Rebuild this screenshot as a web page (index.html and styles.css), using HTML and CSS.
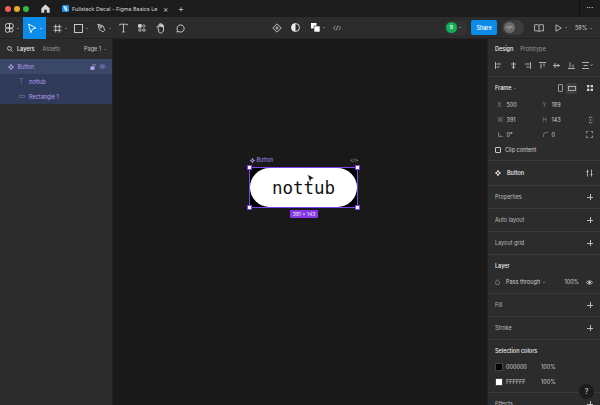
FILE: index.html
```html
<!DOCTYPE html>
<html lang="en">
<head>
<meta charset="utf-8">
<title>Fullstack Decal - Figma Basics</title>
<link rel="stylesheet" href="styles.css">
</head>
<body>
<div class="app">
  <header class="tabbar">
    <div class="lights"><i class="light red"></i><i class="light yellow"></i><i class="light green"></i></div>
    <div class="home"><svg width="9" height="9" viewBox="0 0 10 10"><path d="M5 .6 9.6 4.8V9.6H6.4V6.4H3.6V9.6H.4V4.8Z" fill="#d8d8d8"/></svg></div>
    <div class="tab">
      <svg class="tab-icon" width="7" height="7" viewBox="0 0 8 8"><rect width="8" height="8" rx="1.4" fill="#1f8fe8"/><path d="M1.5 1.5H5L6.5 6.5H3.5Z" fill="#bfe2fb"/></svg>
      <span class="tab-title">Fullstack Decal - Figma Basics Le</span>
      <span class="tab-close">×</span>
    </div>
    <span class="tab-add">+</span>
    <div class="more">•••</div>
  </header>

  <nav class="toolbar">
    <div class="tools">
      <div class="tool tool-center">
        <svg width="9" height="11" viewBox="0 0 9 11" fill="none" stroke="#d8d8d8" stroke-width=".9"><path d="M4.500 .6H2.500a2.200 2.200 0 0 0 0 4.400h2ZM4.500 .6h1.700a2.200 2.200 0 0 1 0 4.400H4.500ZM4.500 5H2.500a2.200 2.200 0 0 0 0 4.400 2 2 0 0 0 2-2Z"/><circle cx="6.300" cy="7.200" r="1.800"/></svg><b class="caret"></b>
      </div>
      <div class="tool tool-center tool-move">
        <svg width="10" height="11" viewBox="0 0 10 11" fill="none" stroke="#fff" stroke-width=".9"><path d="M1.500 1 9 5 5.500 6 3.800 9.800Z"/></svg><b class="caret light-caret"></b>
      </div>
      <div class="tool tool-frame">
        <svg width="9" height="9" viewBox="0 0 10 10" stroke="#d8d8d8" stroke-width=".9"><path d="M3 .5V9.500M7 .5V9.500M.5 3H9.500M.5 7H9.500"/></svg><b class="caret"></b>
      </div>
      <div class="tool">
        <svg width="9" height="9" viewBox="0 0 10 10" fill="none" stroke="#d8d8d8" stroke-width="1"><rect x=".6" y=".6" width="8.800" height="8.800"/></svg><b class="caret"></b>
      </div>
      <div class="tool tool-pen">
        <svg width="9" height="10" viewBox="0 0 10 11" fill="none" stroke="#d8d8d8" stroke-width=".9"><path d="M1 1.200 6.800 3.200 8.600 8 6.600 9.600 2.600 7.400Z"/><circle cx="4.200" cy="4.400" r="1"/><path d="M1 1.200 3.500 3.700"/></svg><b class="caret"></b>
      </div>
      <div class="tool tool-plain">
        <svg width="9" height="10" viewBox="0 0 10 10" fill="none" stroke="#d8d8d8" stroke-width=".9"><path d="M.8 2.200V.8H9.200V2.200M5 .8V9.400M3.600 9.400H6.400"/></svg>
      </div>
      <div class="tool tool-plain">
        <svg width="8" height="8" viewBox="0 0 10 10" fill="none" stroke="#d8d8d8" stroke-width="1"><rect x=".8" y=".8" width="3.200" height="3.200" fill="#d8d8d8"/><path d="M7.300.6 9 2.400 7.300 4.200 5.600 2.400Z"/><circle cx="2.400" cy="7.600" r="1.600"/><circle cx="7.400" cy="7.600" r="1.600"/></svg>
      </div>
      <div class="tool tool-plain">
        <svg width="10" height="11" viewBox="0 0 10 11" fill="none" stroke="#d8d8d8" stroke-width=".9"><path d="M2.600 6 1.200 4.400c-.6-.8.4-1.500 1-1L3 4.200V1.700c0-.9 1.100-.9 1.100 0V3.800 1.100c0-.8 1.200-.8 1.200 0V3.800 1.600c0-.8 1.100-.8 1.100 0V4.200 2.600c0-.8 1.100-.8 1.100 0V7c0 1.700-1.300 3-3 3S3.300 9 2.600 8Z"/></svg>
      </div>
      <div class="tool tool-plain">
        <svg width="9" height="9" viewBox="0 0 10 10" fill="none" stroke="#d8d8d8" stroke-width="1"><path d="M5 1a4 4 0 1 1-2.200 7.300L1 9l.7-1.900A4 4 0 0 1 5 1Z"/></svg>
      </div>
    </div>
    <div class="center-tools">
      <svg width="10" height="10" viewBox="0 0 10 10" fill="none" stroke="#cfcfcf" stroke-width=".9"><path d="M5 .8 9.200 5 5 9.200 .8 5Z"/><circle cx="5" cy="5" r="1.100"/></svg>
      <svg width="9" height="9" viewBox="0 0 10 10"><circle cx="5" cy="5" r="4.400" fill="none" stroke="#eee"/><path d="M5 .6a4.400 4.400 0 0 0 0 8.800Z" fill="#eee"/></svg>
      <span class="boolean"><svg width="9" height="9" viewBox="0 0 9 9"><rect width="5.500" height="5.500" fill="#fff"/><rect x="3" y="3" width="6" height="6" fill="#fff" stroke="#2c2c2c" stroke-width=".6"/></svg><b class="caret"></b></span>
      <svg width="8" height="6" viewBox="0 0 8 6" fill="none" stroke="#aaa" stroke-width=".8"><path d="M2.400 .8.500 3 2.400 5.200M5.600 .8 7.500 3 5.600 5.200M4.700 .8 3.300 5.200"/></svg>
    </div>
    <div class="right-tools">
      <div class="avatar-wrap"><span class="avatar">B</span><b class="caret"></b></div>
      <button class="share">Share</button>
      <div class="dev-toggle"><span class="dev-knob">&lt;/&gt;</span></div>
      <svg class="book" width="10" height="8" viewBox="0 0 10 8" fill="none" stroke="#d0d0d0" stroke-width=".8"><path d="M5 1.300C4 .5 2 .5.600.8V7c1.400-.3 3.400-.3 4.400.5 1-.8 3-.8 4.400-.5V.8C8 .5 6 .5 5 1.300ZM5 1.300V7.500"/></svg>
      <span class="play"><svg width="7" height="8" viewBox="0 0 7 8" fill="none" stroke="#d0d0d0" stroke-width=".8"><path d="M1 .8 6.200 4 1 7.200Z"/></svg><b class="caret"></b></span>
      <span class="zoom-level">58%<b class="caret"></b></span>
    </div>
  </nav>

  <div class="workspace">
    <aside class="left">
      <div class="left-head">
        <svg width="6" height="6" viewBox="0 0 6 6" fill="none" stroke="#ddd" stroke-width=".8"><circle cx="2.400" cy="2.400" r="1.900"/><path d="M3.800 3.800 5.700 5.700"/></svg>
        <span class="lh-active">Layers</span>
        <span class="lh-muted">Assets</span>
        <span class="page">Page 1<b class="caret"></b></span>
      </div>
      <div class="layer layer-top">
        <svg class="layer-icon" width="6" height="6" viewBox="0 0 6 6" fill="#b69cf5"><path d="M3 0 4.300 1.300 3 2.600 1.700 1.300ZM3 3.400 4.300 4.700 3 6 1.700 4.700ZM1.300 1.700 2.600 3 1.300 4.300 0 3ZM4.700 1.700 6 3 4.700 4.300 3.400 3Z"/></svg>
        <span class="layer-name">Button</span>
        <svg class="lock" width="6" height="6" viewBox="0 0 6 6" fill="#c3a8f7"><rect x=".5" y="2.500" width="4" height="3.300"/><path d="M3 2.500V1.200a1.200 1.200 0 0 1 2.400 0V2" fill="none" stroke="#c3a8f7" stroke-width=".6"/></svg>
        <svg class="eye" width="7" height="5" viewBox="0 0 7 5" fill="none" stroke="#a98fe8" stroke-width=".6"><path d="M.3 2.500C1.500.3 5.500.3 6.700 2.500 5.500 4.700 1.500 4.700.3 2.500Z"/><circle cx="3.500" cy="2.500" r=".9"/></svg>
      </div>
      <div class="layer layer-child">
        <span class="child-glyph">T</span>
        <span class="layer-name">nottub</span>
      </div>
      <div class="layer layer-child">
        <svg class="child-rect" width="6" height="3" viewBox="0 0 6 3" fill="none" stroke="#66708c" stroke-width=".7"><rect x=".4" y=".4" width="5.200" height="2.200"/></svg>
        <span class="layer-name">Rectangle 1</span>
      </div>
    </aside>

    <main class="canvas">
      <div class="frame-label">
        <svg width="5" height="5" viewBox="0 0 6 6" fill="#b69cf5"><path d="M3 0 4.300 1.300 3 2.600 1.700 1.300ZM3 3.400 4.300 4.700 3 6 1.700 4.700ZM1.300 1.700 2.600 3 1.300 4.300 0 3ZM4.700 1.700 6 3 4.700 4.300 3.400 3Z"/></svg>
        <span>Button</span>
      </div>
      <div class="code-label">&lt;/&gt;</div>
      <div class="frame">
        <div class="pill"><span class="pill-text">nottub</span></div>
        <i class="handle tl"></i><i class="handle tr"></i><i class="handle bl"></i><i class="handle br"></i>
      </div>
      <svg class="cursor" width="8" height="9" viewBox="0 0 8 9"><path d="M.6.4 7.400 4.200 4.300 5 3 8.400Z" fill="#111" stroke="#fff" stroke-width=".5"/></svg>
      <div class="size-badge">391 × 143</div>
    </main>

    <aside class="right">
      <section class="r-tabs"><span class="lh-active">Design</span><span class="lh-muted">Prototype</span></section>
      <section class="r-align">
        <svg width="7" height="7" viewBox="0 0 7 7" fill="none" stroke="#d0d0d0" stroke-width=".8"><path d="M.5 0V7M1.500 2H6M1.500 5H4.500"/></svg>
        <svg width="7" height="7" viewBox="0 0 7 7" fill="none" stroke="#d0d0d0" stroke-width=".8"><path d="M3.500 0V7M1 2H6M1.800 5H5.200"/></svg>
        <svg width="7" height="7" viewBox="0 0 7 7" fill="none" stroke="#d0d0d0" stroke-width=".8"><path d="M6.500 0V7M1 2H5.500M2.500 5H5.500"/></svg>
        <svg width="7" height="7" viewBox="0 0 7 7" fill="none" stroke="#d0d0d0" stroke-width=".8"><path d="M0 .5H7M2 1.500V6.500M5 1.500V4.500"/></svg>
        <svg width="7" height="7" viewBox="0 0 7 7" fill="none" stroke="#d0d0d0" stroke-width=".8"><path d="M0 3.500H7M2 1V6M5 1.800V5.200"/></svg>
        <svg width="7" height="7" viewBox="0 0 7 7" fill="none" stroke="#d0d0d0" stroke-width=".8"><path d="M0 6.500H7M2 .5V5.500M5 2.500V5.500"/></svg>
        <svg width="11" height="7" viewBox="0 0 11 7" fill="none" stroke="#d0d0d0" stroke-width=".8"><path d="M0 .5H7M0 6.500H7M1.500 3.500H5.500M8.500 2.500 9.500 3.500 10.500 2.500"/></svg>
      </section>
      <section class="r-frame">
        <div class="frame-head">
          <span class="strong">Frame<b class="caret"></b></span>
          <span class="orient">
            <svg width="5" height="8" viewBox="0 0 5 8" fill="none" stroke="#ccc" stroke-width=".7"><rect x=".5" y=".5" width="4" height="7" rx=".6"/></svg>
            <span class="orient-on"><svg width="8" height="5" viewBox="0 0 8 5" fill="none" stroke="#ddd" stroke-width=".7"><rect x=".5" y=".5" width="7" height="4"/></svg></span>
          </span>
          <svg width="6" height="6" viewBox="0 0 6 6" fill="#d8d8d8"><rect width="2.300" height="2.300"/><rect x="3.700" width="2.300" height="2.300"/><rect y="3.700" width="2.300" height="2.300"/><rect x="3.700" y="3.700" width="2.300" height="2.300"/></svg>
        </div>
        <div class="field-row"><span class="key">X</span><span class="val">500</span><span class="key">Y</span><span class="val">189</span></div>
        <div class="field-row"><span class="key">W</span><span class="val">391</span><span class="key">H</span><span class="val">143</span>
          <svg class="field-end" width="5" height="8" viewBox="0 0 5 8" fill="none" stroke="#bbb" stroke-width=".7"><path d="M.6 2.400 2.500.6 4.400 2.400M.6 5.600 2.500 7.400 4.400 5.600M2.500 3V5"/></svg></div>
        <div class="field-row"><span class="key"><svg width="5" height="5" viewBox="0 0 5 5" fill="none" stroke="#8a8a8a" stroke-width=".7"><path d="M.5 0V4.500H5M.5 2.500C1.500 2.500 2.500 3.500 2.500 4.500"/></svg></span><span class="val">0°</span><span class="key"><svg width="5" height="5" viewBox="0 0 5 5" fill="none" stroke="#8a8a8a" stroke-width=".7"><path d="M.5 5V3A2.500 2.500 0 0 1 3 .5H5"/></svg></span><span class="val">0</span>
          <svg class="field-end" width="7" height="7" viewBox="0 0 7 7" fill="none" stroke="#bbb" stroke-width=".7"><path d="M.4 2.400V.4H2.400M4.600.4H6.600V2.400M6.600 4.600V6.600H4.600M2.400 6.600H.4V4.600"/></svg></div>
        <div class="clip-row"><i class="checkbox"></i><span class="val">Clip content</span></div>
      </section>
      <section class="r-comp">
        <svg width="6" height="6" viewBox="0 0 6 6" fill="#e8e8e8"><path d="M3 0 4.300 1.300 3 2.600 1.700 1.300ZM3 3.400 4.300 4.700 3 6 1.700 4.700ZM1.300 1.700 2.600 3 1.300 4.300 0 3ZM4.700 1.700 6 3 4.700 4.300 3.400 3Z"/></svg>
        <span class="strong">Button</span>
        <svg class="field-end" width="7" height="8" viewBox="0 0 7 8" fill="none" stroke="#ccc" stroke-width=".8"><path d="M1.500.5V7.500M5.500.5V7.500M.4 2.500H2.600M4.400 5.500H6.600"/></svg>
      </section>
      <section class="r-add"><span>Properties</span><i class="plus"></i></section>
      <section class="r-add"><span>Auto layout</span><i class="plus"></i></section>
      <section class="r-add"><span>Layout grid</span><i class="plus"></i></section>
      <section class="r-layer">
        <div class="strong title">Layer</div>
        <div class="blend">
          <svg width="5" height="6" viewBox="0 0 5 6" fill="none" stroke="#aaa" stroke-width=".6"><path d="M2.500.5C3.200 1.500 4.500 2.600 4.500 3.800a2 2 0 0 1-4 0C.5 2.600 1.800 1.500 2.500.5Z"/></svg>
          <span class="val blend-mode">Pass through<b class="caret"></b></span>
          <span class="val pct">100%</span>
          <svg width="7" height="5" viewBox="0 0 7 5" fill="none" stroke="#e0e0e0" stroke-width=".7"><path d="M.3 2.500C1.500.3 5.500.3 6.700 2.500 5.500 4.700 1.500 4.700.3 2.500Z"/><circle cx="3.500" cy="2.500" r=".9" fill="#e0e0e0"/></svg>
        </div>
      </section>
      <section class="r-add"><span>Fill</span><i class="plus"></i></section>
      <section class="r-add"><span>Stroke</span><i class="plus"></i></section>
      <section class="r-colors">
        <div class="strong title colors-title">Selection colors</div>
        <div class="color-row"><i class="swatch black"></i><span class="val hex">000000</span><span class="val">100%</span></div>
        <div class="color-row"><i class="swatch white"></i><span class="val hex">FFFFFF</span><span class="val">100%</span></div>
      </section>
      <section class="r-add"><span>Effects</span><i class="plus"></i></section>
      <div class="help">?</div>
    </aside>
  </div>
</div>
</body>
</html>
```

FILE: styles.css
```css
* { box-sizing: border-box; }
html, body { margin: 0; height: 100%; overflow: hidden; background: #191919; }
body { font-family: Inter, "Liberation Sans", sans-serif; font-size: 5.500px; color: #d0d0d0; }
.app { width: 600px; height: 405px; display: flex; flex-direction: column; overflow: hidden; }

.caret { display: inline-block; width: 0; height: 0; margin-left: 3px; border: 1.500px solid transparent; border-top-color: #a8a8a8; border-bottom: 0; vertical-align: middle; }
.light-caret { border-top-color: #fff; }

.tabbar { height: 17px; flex: none; background: #1c1c1c; display: flex; align-items: center; position: relative; }
.lights { display: flex; gap: 3px; margin-left: 5px; }
.light { width: 6px; height: 6px; border-radius: 50%; }
.red { background: #ee5f55; }
.yellow { background: #e8ac2c; }
.green { background: #2fb845; }
.home { width: 9px; margin-left: 12px; display: flex; }
.tab { display: flex; align-items: center; margin-left: 12px; width: 107px; }
.tab-icon { flex: none; }
.tab-title { margin-left: 3px; font-size: 5.400px; color: #d6d6d6; white-space: nowrap; flex: none; width: 88px; }
.tab-close { margin-left: 3px; color: #c8c8c8; font-size: 8px; }
.tab-add { margin-left: 9px; color: #c8c8c8; font-size: 9px; }
.more { margin-left: auto; width: 21px; height: 17px; border-left: 1px solid #111; line-height: 16px; text-align: center; font-size: 3.500px; color: #ddd; letter-spacing: .4px; }

.toolbar { height: 22px; flex: none; background: #2c2c2c; display: flex; align-items: center; position: relative; border-bottom: 1px solid #222; }
.tools { display: flex; height: 100%; width: 220px; flex: none; }
.tool { width: 23px; height: 22px; display: flex; align-items: center; padding-left: 5px; flex: none; }
.tool-center { justify-content: center; padding-left: 0; }
.tool-frame { padding-left: 6.500px; }
.tool-pen { width: 21.500px; }
.tool-move { background: #0c8ce9; }
.tool .caret { margin-left: 3px; }
.tool-plain { width: 19px; padding-left: 0; justify-content: center; }
.center-tools { display: flex; align-items: center; gap: 9px; margin-left: 52px; }
.boolean { display: flex; align-items: center; margin: 0 -1px 0 2px; }
.right-tools { position: absolute; left: 445px; top: 0; height: 21px; display: flex; align-items: center; }
.avatar-wrap { width: 22px; height: 14px; background: #333; border-radius: 7px; display: flex; align-items: center; }
.avatar { width: 11px; height: 11px; margin-left: 1px; border-radius: 50%; background: #14ae5c; color: #fff; font-size: 5px; text-align: center; line-height: 11px; }
.avatar-wrap .caret { margin-left: 2px; }
.share { margin-left: 4px; width: 26px; height: 15px; border: 0; padding: 0; border-radius: 2.500px; background: #0c8ce9; color: #fff; font: 500 5.500px Inter, sans-serif; }
.dev-toggle { margin-left: 5px; width: 22px; height: 15px; background: #3c3c3c; border-radius: 8px; padding: 2px; }
.dev-knob { display: block; width: 11px; height: 11px; border-radius: 50%; background: #6a6a6a; color: #e0e0e0; font-size: 4px; line-height: 11px; text-align: center; }
.book { margin-left: 10px; }
.play { margin-left: 11px; display: flex; align-items: center; }
.play .caret { margin-left: 3px; }
.zoom-level { margin-left: 8px; color: #d0d0d0; white-space: nowrap; }

.workspace { flex: 1; min-height: 0; display: flex; }
.left { width: 113px; flex: none; background: #2c2c2c; border-right: 1px solid #222; }
.left-head { height: 20px; display: flex; align-items: center; padding: 0 6px 0 7px; }
.lh-active { color: #f0f0f0; font-weight: 500; }
.lh-muted { color: #9a9a9a; }
.left-head .lh-active { margin-left: 4px; }
.left-head .lh-muted { margin-left: 8px; }
.page { margin-left: auto; color: #c4c4c4; }
.page .caret { border-top-color: #888; }
.layer { height: 15px; display: flex; align-items: center; color: #b89ef0; }
.layer-top { background: #3a4766; padding-left: 7.500px; }
.layer-top .layer-name { margin-left: 4px; }
.lock { margin-left: auto; }
.eye { margin: 0 6px 0 3px; }
.layer-child { background: #303b5a; padding-left: 19px; }
.child-glyph { width: 6px; color: #66708c; font-size: 7px; }
.child-rect { width: 6px; }
.layer-child .layer-name { margin-left: 4px; }

.canvas { flex: 1; position: relative; background: #191919; overflow: hidden; }
.frame-label { position: absolute; left: 137px; top: 118px; display: flex; align-items: center; gap: 1.500px; color: #a88bea; font-size: 5.500px; }
.code-label { position: absolute; left: 237px; top: 118px; font-size: 5px; color: #b0b0b0; }
.frame { position: absolute; left: 136px; top: 128px; width: 109px; height: 41px; background: #000; border: 1px solid #7b45e8; }
.pill { width: 100%; height: 100%; background: #fff; border-radius: 20px; display: flex; align-items: center; justify-content: center; }
.pill-text { font-family: "DejaVu Sans Mono", monospace; font-size: 17.500px; color: #111; }
.handle { position: absolute; width: 5px; height: 5px; background: #fff; border: 1px solid #7b45e8; }
.tl { left: -3px; top: -3px; }
.tr { right: -3px; top: -3px; }
.bl { left: -3px; bottom: -3px; }
.br { right: -3px; bottom: -3px; }
.cursor { position: absolute; left: 194px; top: 135px; }
.size-badge { position: absolute; left: 177px; top: 171px; width: 28px; height: 8px; border-radius: 1px; background: #8638e8; color: #eee; font-size: 5px; line-height: 8px; text-align: center; white-space: nowrap; }

.right { width: 113px; flex: none; background: #2c2c2c; border-left: 1px solid #222; position: relative; margin-left: auto; overflow: hidden; }
.right > section { padding-left: 7px; padding-right: 7px; border-bottom: 1px solid #3a3a3a; }
.strong { color: #eee; font-weight: 500; }
.val { color: #cfcfcf; }
.key { color: #8a8a8a; width: 9px; display: flex; }
.r-tabs { height: 19px; display: flex; align-items: center; gap: 7px; border-bottom: 0 !important; }
.r-align { height: 19px; display: flex; align-items: center; justify-content: space-between; padding-bottom: 4px; }
.r-frame { height: 84px; }
.frame-head { height: 20px; padding-top: 2px; display: flex; align-items: center; }
.frame-head .caret { border-top-color: #888; }
.orient { margin-left: auto; display: flex; align-items: center; gap: 3px; margin-right: 10px; }
.orient-on { width: 11px; height: 11px; background: #3e3e3e; border-radius: 1.500px; display: flex; align-items: center; justify-content: center; }
.field-row { height: 15px; display: flex; align-items: center; position: relative; padding-left: 2.500px; }
.field-row .val { width: 36px; }
.field-end { margin-left: auto; }
.field-row .field-end { position: absolute; right: 0; top: 4px; }
.clip-row { height: 15px; display: flex; align-items: center; gap: 4px; }
.checkbox { width: 6px; height: 6px; border: 1px solid #c8c8c8; border-radius: 1px; }
.r-comp { height: 25px; display: flex; align-items: center; gap: 6px; }
.r-add { height: 23px; display: flex; align-items: center; justify-content: space-between; color: #bcbcbc; }
.plus { width: 6px; height: 6px; background: linear-gradient(#bbb,#bbb) center/100% 1px no-repeat, linear-gradient(#bbb,#bbb) center/1px 100% no-repeat; }
.r-layer { height: 39px; }
.title { height: 23px; line-height: 23px; }
.colors-title { margin-bottom: -4px; }
.blend { display: flex; align-items: center; height: 10px; margin-top: -1px; }
.blend-mode { margin-left: 6px; }
.pct { margin-left: auto; margin-right: 7px; }
.r-colors { height: 53px; }
.color-row { height: 15px; display: flex; align-items: center; }
.swatch { width: 8px; height: 8px; margin-right: 3px; border: 1px solid #444; flex: none; }
.black { background: #000; }
.white { background: #fff; }
.hex { width: 35px; }
.help { position: absolute; right: 6px; bottom: 6px; width: 15px; height: 15px; border-radius: 50%; background: #1c1c1c; color: #ddd; font-size: 7px; line-height: 15px; text-align: center; }
```
